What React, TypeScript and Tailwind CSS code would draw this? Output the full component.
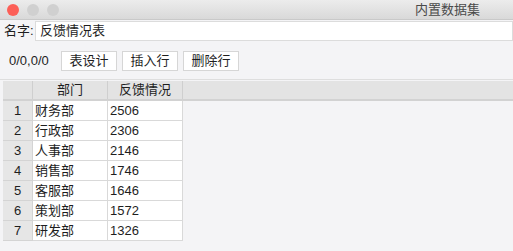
import React from 'react';

const rows: [string, string][] = [
  ['财务部', '2506'],
  ['行政部', '2306'],
  ['人事部', '2146'],
  ['销售部', '1746'],
  ['客服部', '1646'],
  ['策划部', '1572'],
  ['研发部', '1326'],
];

const font = { fontFamily: '"Liberation Sans", "Noto Sans CJK SC", sans-serif' };

function Btn({ label }: { label: string }) {
  return (
    <div className="flex h-5 w-14 items-center justify-center border border-[#d6d6d6] bg-white text-[13px] text-[#1e1e1e]">
      {label}
    </div>
  );
}

export default function App() {
  return (
    <div className="flex h-[251px] w-[513px] flex-col overflow-hidden bg-[#f4f4f6]" style={font}>
      {/* title bar */}
      <div className="flex h-5 items-center border-b border-[#c9c9c9] bg-gradient-to-b from-[#ececec] to-[#d9d9d9] pl-[7px] pr-[33px]">
        <div className="flex gap-2">
          <span className="h-3 w-3 rounded-full bg-[#fc5f57]" />
          <span className="h-3 w-3 rounded-full bg-[#d0d0d0]" />
          <span className="h-3 w-3 rounded-full bg-[#d0d0d0]" />
        </div>
        <div className="ml-auto text-[13px] text-[#4a4a4a]">内置数据集</div>
      </div>

      {/* name row */}
      <div className="mt-px flex h-5 items-center">
        <span className="w-[35px] pl-1 text-[13px] text-[#1e1e1e]">名字:</span>
        <div className="flex h-full flex-1 items-center border border-[#dcdcdc] bg-white pl-1 text-[13px] text-[#1e1e1e]">
          反馈情况表
        </div>
      </div>

      {/* toolbar */}
      <div className="mt-[10px] flex h-5 items-center gap-[5px] pl-[9px]">
        <span className="w-[47px] text-[13px] text-[#1e1e1e]">0/0,0/0</span>
        <Btn label="表设计" />
        <Btn label="插入行" />
        <Btn label="删除行" />
      </div>

      <div className="mt-2 h-px bg-[#dedede]" />

      {/* table */}
      <div className="mt-px pl-[3px] text-[13px] text-[#1e1e1e]">
        <div className="flex h-5 border-b-2 border-[#d2d2d2] bg-[#e3e3e3]">
          <div className="w-[30px] border-r border-[#cfcfcf]" />
          <div className="flex w-[75px] items-center justify-center border-r border-[#cfcfcf]">部门</div>
          <div className="flex w-[75px] items-center justify-center border-r border-[#cfcfcf]">反馈情况</div>
        </div>
        {rows.map(([dept, val], i) => (
          <div key={i} className="flex h-5">
            <div className="flex w-[30px] items-center justify-center border-b border-r border-[#d4d4d4] bg-[#e6e6e6]">
              {i + 1}
            </div>
            <div className="flex w-[75px] items-center border-b border-r border-[#d9d9d9] bg-white pl-0.5">{dept}</div>
            <div className="flex w-[75px] items-center border-b border-r border-[#d9d9d9] bg-white pl-0.5">{val}</div>
          </div>
        ))}
      </div>
    </div>
  );
}
